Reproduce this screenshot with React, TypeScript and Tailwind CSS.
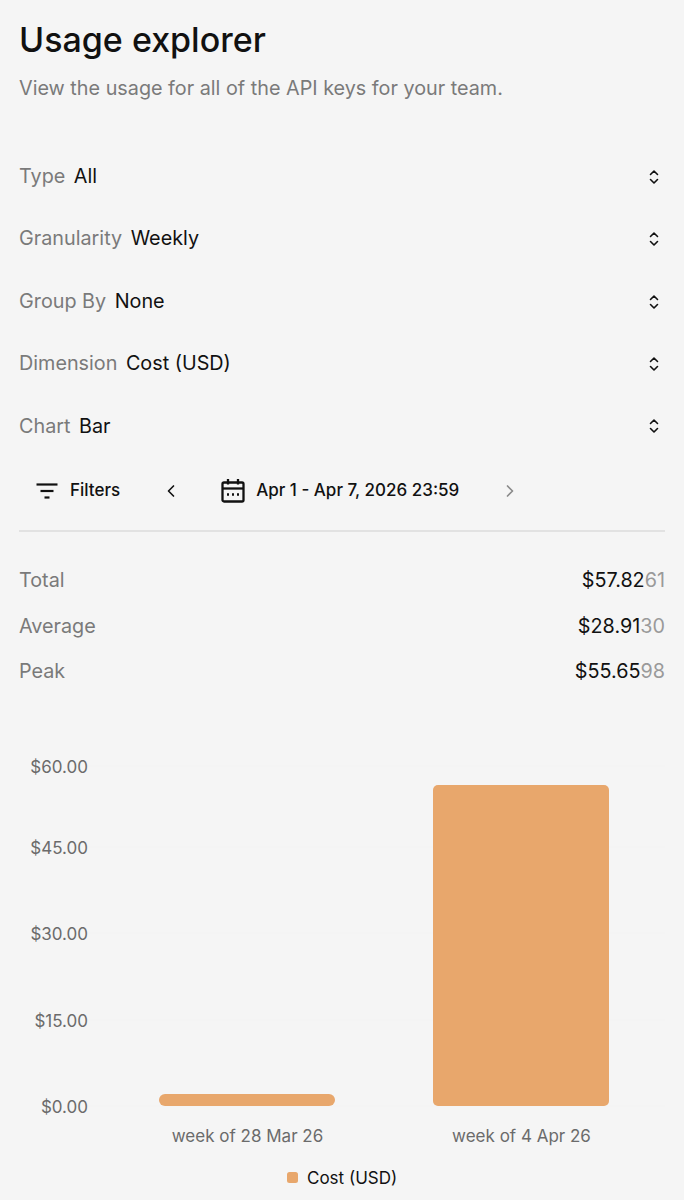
import React from 'react';
import { ChevronLeft, ChevronRight } from 'lucide-react';

const selects = [
  { label: 'Type', value: 'All' },
  { label: 'Granularity', value: 'Weekly' },
  { label: 'Group By', value: 'None' },
  { label: 'Dimension', value: 'Cost (USD)' },
  { label: 'Chart', value: 'Bar' },
];

const stats = [
  { label: 'Total', main: '$57.82', rest: '61' },
  { label: 'Average', main: '$28.91', rest: '30' },
  { label: 'Peak', main: '$55.65', rest: '98' },
];

const ticks = [
  { label: '$60.00', y: 766 },
  { label: '$45.00', y: 847 },
  { label: '$30.00', y: 933 },
  { label: '$15.00', y: 1020 },
  { label: '$0.00', y: 1106 },
];

function UpDownIcon() {
  return (
    <svg width="12" height="16" viewBox="0 0 12 16" fill="none" stroke="#111" strokeWidth="1.6" strokeLinecap="round" strokeLinejoin="round">
      <path d="M2.5 5.5 6 2l3.5 3.5" />
      <path d="M2.5 10.5 6 14l3.5-3.5" />
    </svg>
  );
}

function FilterIcon() {
  return (
    <svg width="24" height="24" viewBox="0 0 24 24" fill="none" stroke="#111" strokeWidth="2.2" strokeLinecap="butt">
      <path d="M1.5 5.5h21" />
      <path d="M5.5 12h13" />
      <path d="M9.5 18.5h5" />
    </svg>
  );
}

function CalendarIcon() {
  return (
    <svg width="26" height="26" viewBox="0 0 26 26" fill="none" stroke="#111" strokeWidth="2.3">
      <rect x="2.5" y="4.5" width="21" height="19" rx="1.5" />
      <path d="M2.5 10.5h21" />
      <path d="M8 1v5.5M18 1v5.5" />
      <path d="M7 16.5h2M12 16.5h2M17 16.5h2" />
    </svg>
  );
}

function UsageChart() {
  return (
    <svg width="684" height="470" viewBox="0 730 684 470" className="block">
      {ticks.map(t => (
        <g key={t.label}>
          <line x1="85" x2="665" y1={t.y} y2={t.y} stroke="#f3f3f3" />
          <text x="88" y={t.y + 7} textAnchor="end" fontSize="17" fill="#6b6b6b">{t.label}</text>
        </g>
      ))}
      <rect x="159" y="1094" width="176" height="12" rx="6" fill="#e8a76c" />
      <rect x="433" y="785" width="176" height="321" rx="5" fill="#e8a76c" />
      <text x="247.5" y="1142" textAnchor="middle" fontSize="17" fill="#6b6b6b">week of 28 Mar 26</text>
      <text x="521.5" y="1142" textAnchor="middle" fontSize="17" fill="#6b6b6b">week of 4 Apr 26</text>
      <rect x="287" y="1172" width="11" height="11" rx="2.5" fill="#e8a76c" />
      <text x="307" y="1184" fontSize="17" fill="#111">Cost (USD)</text>
    </svg>
  );
}

export default function App() {
  return (
    <div className="h-[1200px] w-[684px] overflow-hidden bg-[#f5f5f5] font-['Inter',sans-serif]">
      <div className="px-[19px] pt-[18px]">
        <h1 className="text-[34px] leading-[44px] font-medium text-[#111]">Usage explorer</h1>
        <p className="mt-[11px] text-[19.8px] leading-[30px] text-[#7a7a7a]">
          View the usage for all of the API keys for your team.
        </p>

        <div className="mt-[42.6px]">
          {selects.map(s => (
            <div key={s.label} className="flex h-[62.4px] items-center justify-between text-[19.8px]">
              <div className="flex items-center gap-[8.5px]">
                <span className="text-[#7a7a7a]">{s.label}</span>
                <span className="text-[#111]">{s.value}</span>
              </div>
              <div className="mr-[5px] flex">
                <UpDownIcon />
              </div>
            </div>
          ))}
        </div>

        <div className="mt-[6.6px] flex h-[68px] items-center border-b-2 border-[#e2e2e2] pb-[13px] text-[#111]">
          <div className="ml-[16px] flex items-center gap-[11px]">
            <FilterIcon />
            <span className="text-[17px] font-medium">Filters</span>
          </div>
          <ChevronLeft className="ml-[41px] h-[20px] w-[20px]" strokeWidth={2} />
          <div className="ml-[39px] flex items-center gap-[10px]">
            <CalendarIcon />
            <span className="text-[17px] font-medium">Apr 1 - Apr 7, 2026 23:59</span>
          </div>
          <ChevronRight className="ml-[41px] h-[20px] w-[20px] text-[#8a8a8a]" strokeWidth={2} />
        </div>

        <div className="mt-[33.8px] flex flex-col gap-[15.5px]">
          {stats.map(s => (
            <div key={s.label} className="flex h-[30px] items-center justify-between text-[19.8px]">
              <span className="text-[#7a7a7a]">{s.label}</span>
              <span className="text-[#111]">
                {s.main}
                <span className="text-[#9a9a9a]">{s.rest}</span>
              </span>
            </div>
          ))}
        </div>
      </div>
      <div className="mt-[43px]">
        <UsageChart />
      </div>
    </div>
  );
}
